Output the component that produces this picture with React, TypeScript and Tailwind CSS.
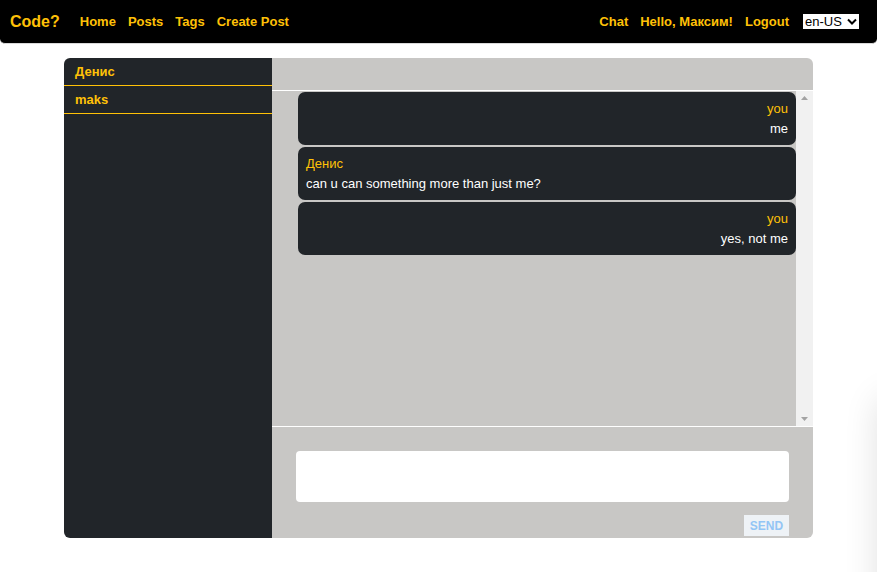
import React from 'react';

interface Message {
  id: number;
  author: string;
  text: string;
  mine: boolean;
}

const contacts = ['Денис', 'maks'];

const messages: Message[] = [
  { id: 1, author: 'you', text: 'me', mine: true },
  { id: 2, author: 'Денис', text: 'can u can something more than just me?', mine: false },
  { id: 3, author: 'you', text: 'yes, not me', mine: true },
];

const Navbar: React.FC = () => (
  <nav className="h-[44px] bg-black rounded-b-[5px] border-b border-[#d9d9d9] flex items-center justify-between pl-[10px] pr-[17px] text-[#ffc107] font-bold">
    <div className="flex items-center">
      <span className="text-[16px] mr-[20px]">Code?</span>
      <div className="flex items-center gap-[12px] text-[13px]">
        <a href="#">Home</a>
        <a href="#">Posts</a>
        <a href="#">Tags</a>
        <a href="#">Create Post</a>
      </div>
    </div>
    <div className="flex items-center gap-[12px] text-[13px]">
      <a href="#">Chat</a>
      <span>Hello, Максим!</span>
      <a href="#" className="mr-[1px]">Logout</a>
      <div className="h-[17px] w-[58px] bg-white border border-black flex items-center justify-between pl-[2px] pr-[2px] text-black font-normal text-[13px] leading-none">
        <span>en-US</span>
        <svg width="10" height="7" viewBox="0 0 10 7">
          <path d="M1 1.5 L5 5.5 L9 1.5" stroke="black" strokeWidth="2" fill="none" />
        </svg>
      </div>
    </div>
  </nav>
);

const Bubble: React.FC<{ m: Message }> = ({ m }) => (
  <div className={`bg-[#212529] rounded-[7px] px-[8px] pt-[7px] pb-[6px] text-[13px] leading-[20px] ${m.mine ? 'text-right' : 'text-left'}`}>
    <div className="text-[#ffc107]">{m.author}</div>
    <div className="text-white">{m.text}</div>
  </div>
);

export default function App() {
  return (
    <div className="relative min-h-[572px] bg-white overflow-hidden" style={{ fontFamily: '"Liberation Sans", Arial, sans-serif' }}>
      <Navbar />

      <div className="mx-[64px] mt-[14px] h-[480px] flex rounded-[6px] overflow-hidden">
        <aside className="w-[208px] bg-[#212529] flex flex-col">
          {contacts.map((c) => (
            <div key={c} className="h-[28px] flex items-center pl-[11px] border-b border-[#ffc107] text-[#ffc107] font-bold text-[13px]">
              {c}
            </div>
          ))}
        </aside>

        <section className="flex-1 bg-[#c8c7c5] flex flex-col">
          <div className="h-[33px] border-b border-white" />
          <div className="h-[336px] flex border-b border-white">
            <div className="flex-1 pl-[26px] pt-[1px] flex flex-col gap-[2px]">
              {messages.map((m) => (
                <Bubble key={m.id} m={m} />
              ))}
            </div>
            <div className="w-[17px] bg-[#f1f1f1] flex flex-col justify-between items-center py-[5px]">
              <svg width="7" height="4" viewBox="0 0 7 4"><path d="M0 4 L3.5 0 L7 4 Z" fill="#a3a3a3" /></svg>
              <svg width="7" height="4" viewBox="0 0 7 4"><path d="M0 0 L3.5 4 L7 0 Z" fill="#a3a3a3" /></svg>
            </div>
          </div>
          <div className="flex-1 flex flex-col items-end px-[24px] pt-[24px]">
            <textarea className="w-full h-[51px] bg-white rounded-[4px] resize-none outline-none" />
            <button className="mt-[13px] h-[21px] w-[45px] bg-[#eef2f6] text-[#93c5f5] font-bold text-[12px] flex items-center justify-center">
              SEND
            </button>
          </div>
        </section>
      </div>

      <div className="absolute left-[880px] top-[400px] w-[60px] h-[320px] bg-white shadow-[0_0_36px_rgba(0,0,0,0.14)] pointer-events-none" />
    </div>
  );
}
